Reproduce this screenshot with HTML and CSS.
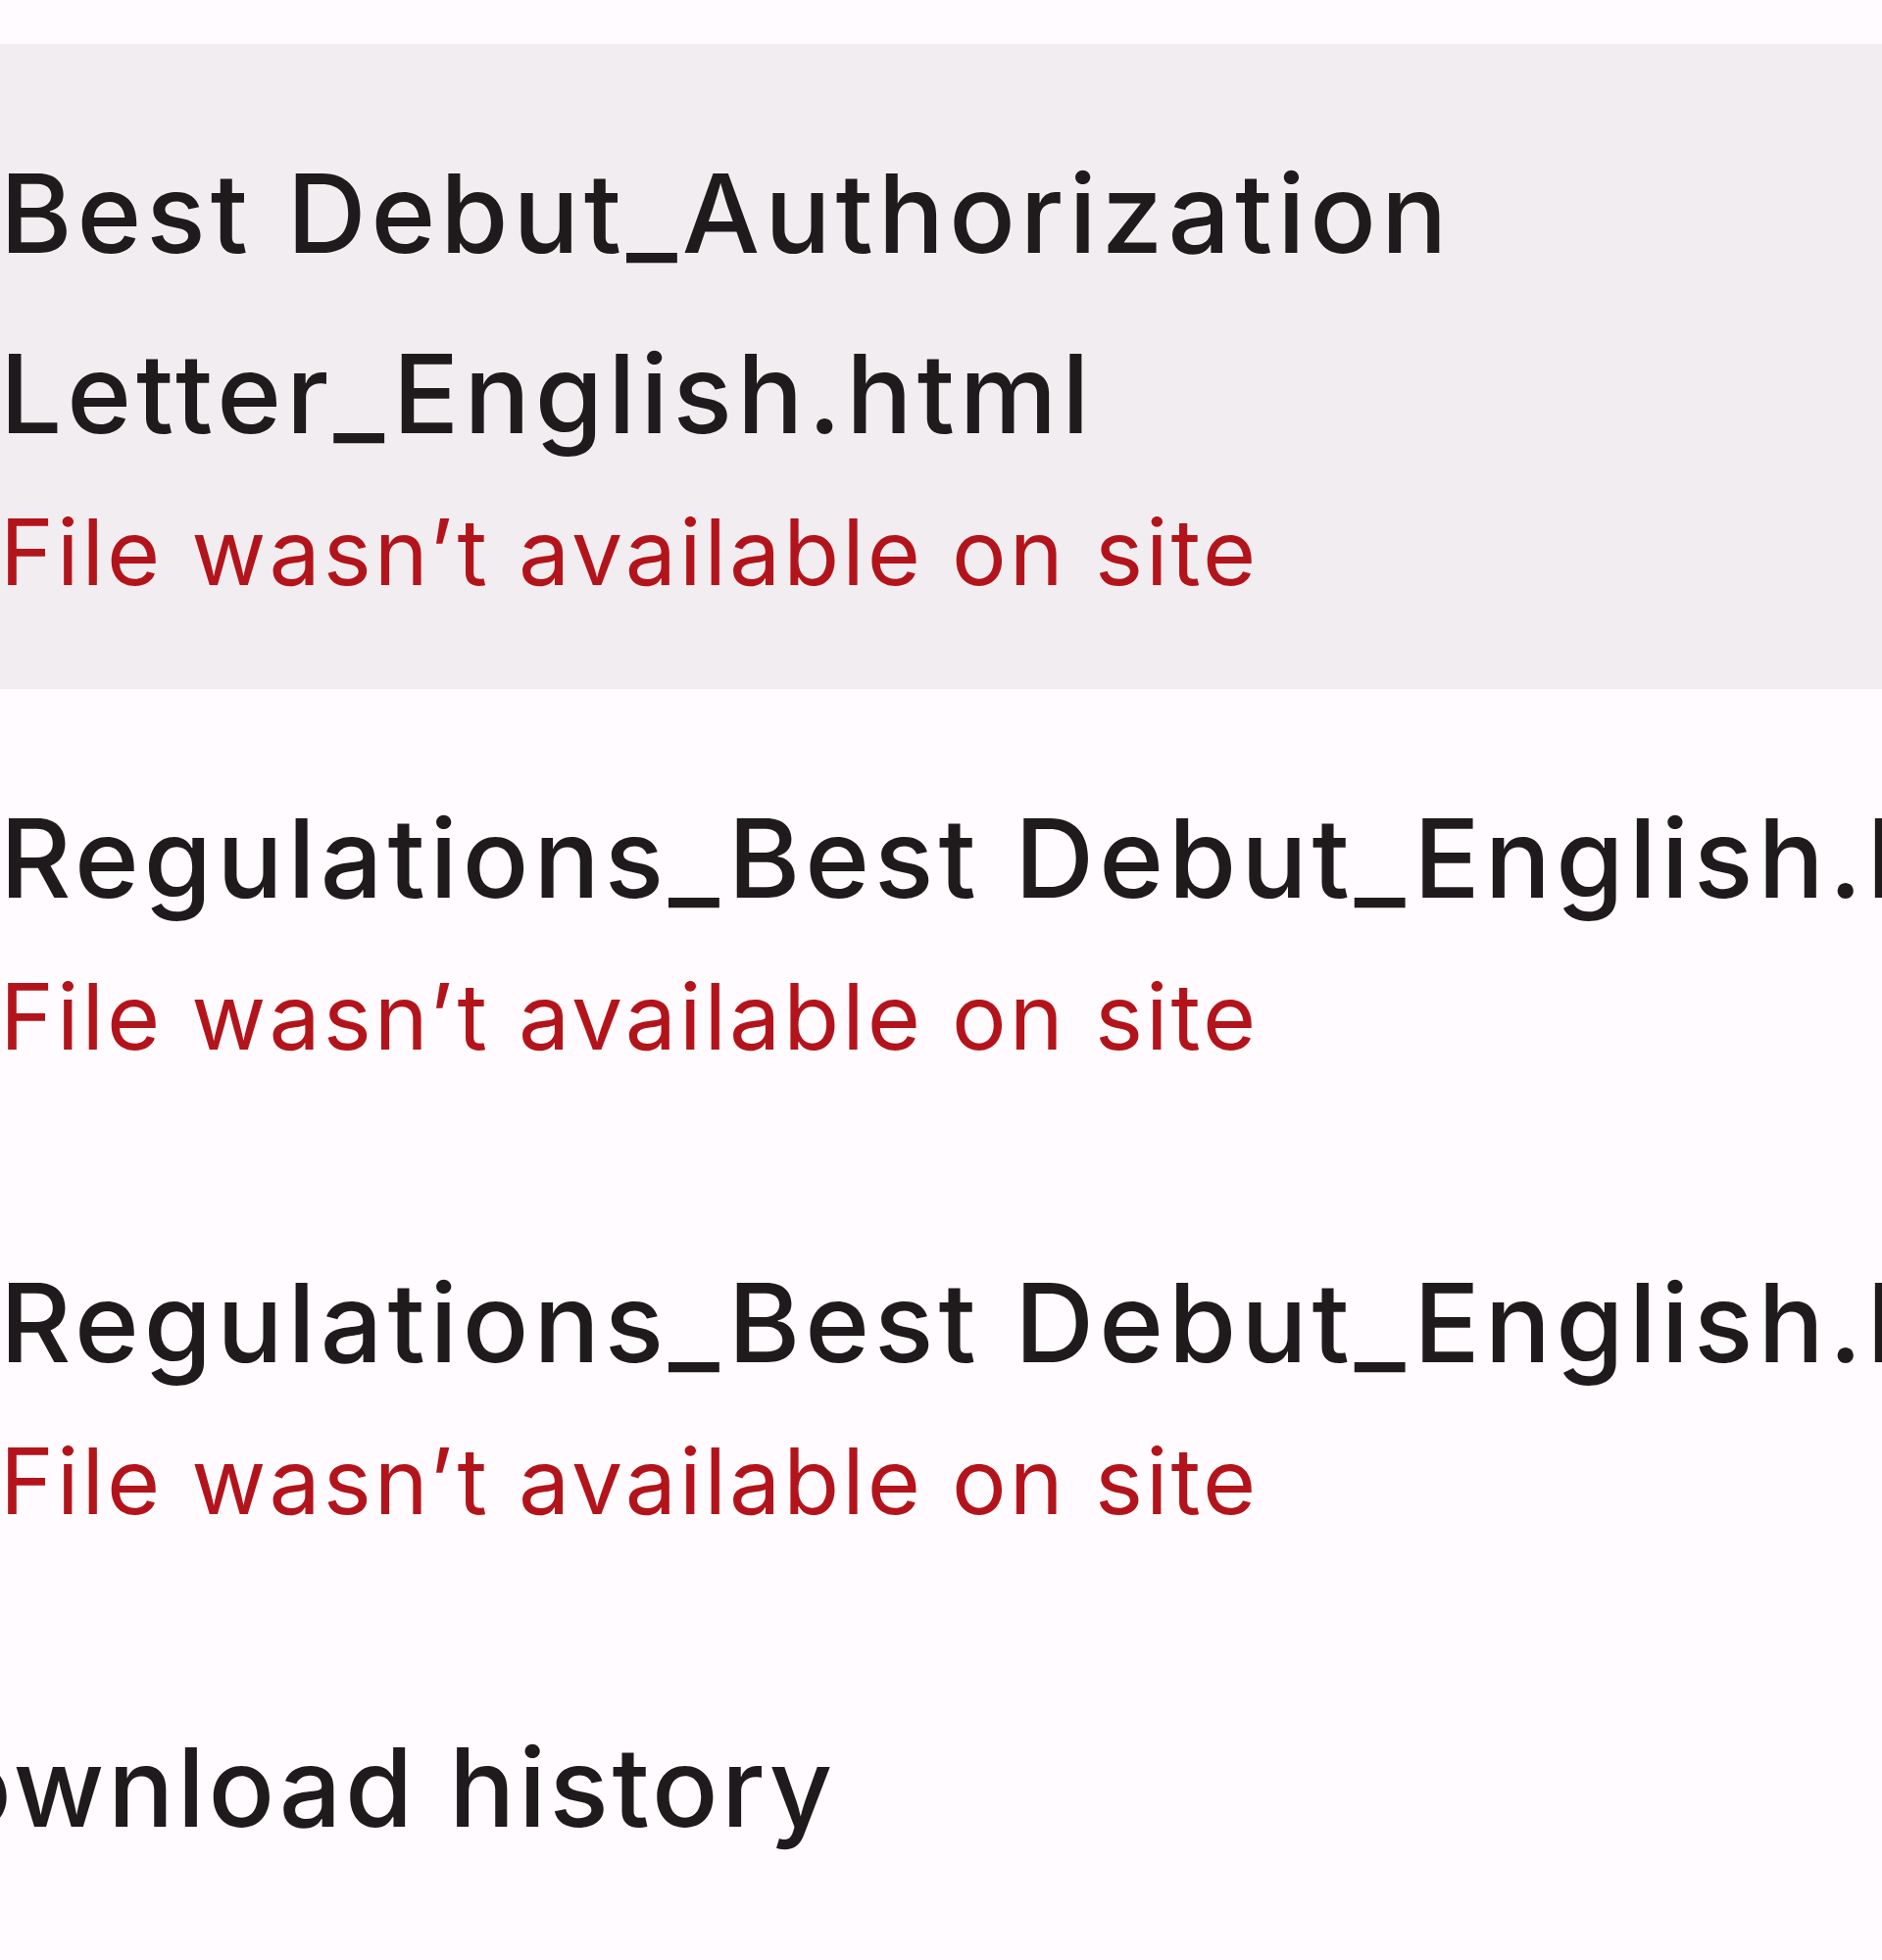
FILE: index.html
```html
<!DOCTYPE html>
<html lang="en">
<head>
<meta charset="utf-8">
<title>Downloads</title>
<link rel="stylesheet" href="styles.css">
</head>
<body>
<div class="bubble">
  <ul class="list">
    <li class="item item-active">
      <div class="name">Best Debut_Authorization Letter_English.html</div>
      <div class="status">File wasn’t available on site</div>
    </li>
    <li class="item">
      <div class="name">Regulations_Best Debut_English.html</div>
      <div class="status">File wasn’t available on site</div>
    </li>
    <li class="item">
      <div class="name">Regulations_Best Debut_English.html</div>
      <div class="status">File wasn’t available on site</div>
    </li>
  </ul>
  <div class="footer">
    <span class="footer-link">Download history</span>
  </div>
</div>
</body>
</html>
```

FILE: styles.css
```css
html, body {
  margin: 0;
  padding: 0;
  overflow: hidden;
  background: #fffbfe;
}

body {
  font-family: Inter, "Noto Sans", "Liberation Sans", sans-serif;
  color: #1f1a1b;
}

.bubble {
  width: 2500px;
  padding-top: 45px;
}

.list {
  list-style: none;
  margin: 0;
  padding: 0;
}

.item {
  padding: 80px 0 70px 0;
}

.item-active {
  background: #f1edf0;
}

.name {
  font-size: 112px;
  font-weight: 500;
  letter-spacing: 5px;
  line-height: 184px;
  color: #1f1a1b;
}

.status {
  font-size: 93px;
  letter-spacing: 3px;
  line-height: 140px;
  color: #b3141b;
}

.footer {
  padding-top: 80px;
  margin-left: -140px;
}

.footer-link {
  font-size: 112px;
  font-weight: 500;
  letter-spacing: 3.5px;
  line-height: 184px;
  color: #1f1a1b;
}
```
